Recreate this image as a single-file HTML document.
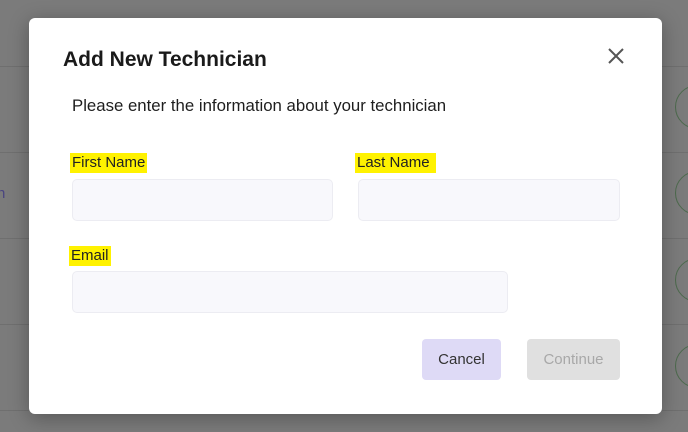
<!DOCTYPE html>
<html><head><style>
body{margin:0;width:688px;height:432px;background:#7b7b7b;position:relative;overflow:hidden;font-family:"Liberation Sans",Arial,sans-serif}
.line{position:absolute;left:0;right:0;height:1px;background:#6f6f6f}
.circ{position:absolute;left:675px;width:44px;height:44px;border-radius:50%;border:1px solid #4d6a4d;box-sizing:border-box}
.modal{position:absolute;left:29px;top:18px;width:633px;height:396px;background:#fff;border-radius:6px;box-shadow:0 4px 20px rgba(0,0,0,.3)}
.a{position:absolute}
.hl{background:#fff200;padding:0 2px;font-size:15px;color:#222;line-height:20px}
.inp{position:absolute;background:#f8f8fc;border:1px solid #ececf2;border-radius:5px;box-sizing:border-box}
.btn{position:absolute;border-radius:4px;font-size:15px;display:flex;align-items:center;justify-content:center}
</style></head><body>
<div class="line" style="top:66px"></div>
<div class="line" style="top:152px"></div>
<div class="line" style="top:238px"></div>
<div class="line" style="top:324px"></div>
<div class="line" style="top:410px"></div>
<div class="circ" style="top:85px"></div>
<div class="circ" style="top:171px"></div>
<div class="circ" style="top:258px"></div>
<div class="circ" style="top:344px"></div>
<div class="a" style="left:-3px;top:185px;color:#4a4580;font-size:15px">n</div>
<div class="modal">
<div class="a" style="left:34px;top:30px;font-size:21px;font-weight:bold;color:#1a1a1a">Add New Technician</div>
<svg class="a" style="left:578px;top:29px" width="18" height="18" viewBox="0 0 18 18"><path d="M2 2L16 16M16 2L2 16" stroke="#555" stroke-width="2"/></svg>
<div class="a" style="left:43px;top:78px;font-size:16.8px;color:#1e1e1e">Please enter the information about your technician</div>
<div class="a hl" style="left:41px;top:135px">First Name</div>
<div class="a hl" style="left:326px;top:135px;padding-right:6px">Last Name</div>
<div class="a hl" style="left:40px;top:228px">Email</div>
<div class="inp" style="left:43px;top:161px;width:261px;height:42px"></div>
<div class="inp" style="left:329px;top:161px;width:262px;height:42px"></div>
<div class="inp" style="left:43px;top:253px;width:436px;height:42px"></div>
<div class="btn" style="left:393px;top:321px;width:79px;height:41px;background:#dedaf6;color:#333">Cancel</div>
<div class="btn" style="left:498px;top:321px;width:93px;height:41px;background:#e0e0e0;color:#a8a8a8">Continue</div>
</div>
</body></html>
